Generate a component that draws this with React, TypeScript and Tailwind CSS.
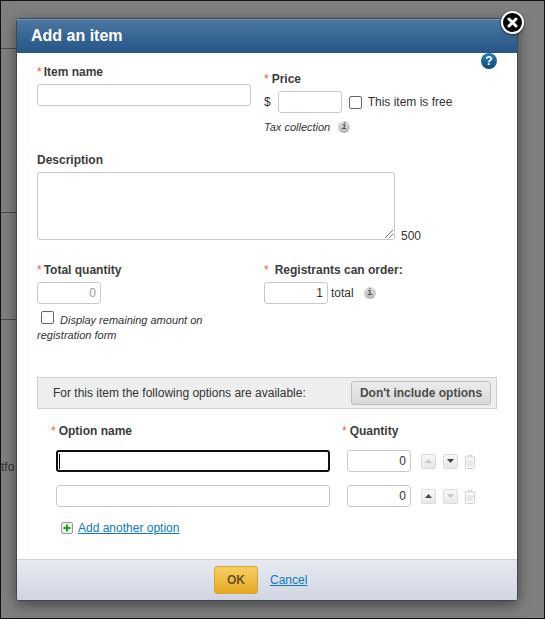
import React from 'react';

const inputBox = 'h-[22px] rounded-[3px] border border-[#c8c8c8] bg-white pr-[4px] text-right text-[12px] text-[#333] outline-none';
const labelText = 'text-[12px] font-bold text-[#3c3c3c]';

const Star = () => <span className="text-[12px] text-[#f0584a]">*</span>;

const InfoDot = () => (
  <span className="flex size-[12px] items-center justify-center rounded-full bg-gradient-to-b from-[#e2e2e2] to-[#b4b4b4] font-['DejaVu_Sans_Mono',monospace] text-[8px] font-bold leading-none text-[#555]">
    i
  </span>
);

const Arrow = ({ up, disabled }: { up?: boolean; disabled?: boolean }) => (
  <span className="flex size-[15px] items-center justify-center rounded-[2px] border border-[#dcdcdc] bg-gradient-to-b from-[#f8f8f8] to-[#e8e8e8]">
    <svg width="7" height="4" viewBox="0 0 7 4">
      <path d={up ? 'M3.5 0L7 4H0z' : 'M0 0h7L3.5 4z'} fill={disabled ? '#c8c8c8' : '#444'} />
    </svg>
  </span>
);

const Trash = () => (
  <svg width="12" height="15" viewBox="0 0 12 15" fill="none" stroke="#d0d0d0" strokeWidth="1">
    <path d="M0.5 3h11M4 3V1.2h4V3M1.5 3.5v10.2c0 .5.3.8.8.8h7.4c.5 0 .8-.3.8-.8V3.5M4 5.5v7M6 5.5v7M8 5.5v7" />
  </svg>
);

const OptionRow = ({ focused, upDisabled, downDisabled }: { focused?: boolean; upDisabled?: boolean; downDisabled?: boolean }) => (
  <div className="flex items-center">
    {focused ? (
      <div className="ml-[19px] flex h-[22px] w-[274px] items-center rounded-[3px] border-2 border-[#101010] bg-white pl-[1px]">
        <span className="h-[15px] w-px bg-black" />
      </div>
    ) : (
      <div className="ml-[19px] h-[22px] w-[274px] rounded-[3px] border border-[#c8c8c8] bg-white" />
    )}
    <div className={`${inputBox} ml-[17px] flex w-[64px] items-center justify-end leading-none`}>0</div>
    <div className="ml-[10px] flex items-center gap-[7px]">
      <Arrow up disabled={upDisabled} />
      <Arrow disabled={downDisabled} />
    </div>
    <span className="ml-[6px] flex"><Trash /></span>
  </div>
);

const App: React.FC = () => {
  return (
    <div className="relative h-[619px] w-[545px] overflow-hidden border border-[#111] bg-[#7f7f7f] font-['Liberation_Sans',Arial,sans-serif] text-[12px] text-[#333]">
      {/* page behind the overlay */}
      <div className="flex h-full w-[15px] flex-col">
        <div className="mt-[47px] h-px bg-[#4a4a4a]" />
        <div className="mt-[163px] h-px bg-[#4a4a4a]" />
        <div className="mt-[106px] h-px bg-[#4a4a4a]" />
        <span className="mt-[141px] text-[12px] leading-none text-[#333]">tfo</span>
      </div>

      <div className="absolute left-[15px] top-[17px] flex h-[583px] w-[502px] flex-col rounded-[3px] border border-[#3f4656] bg-white shadow-[0_4px_14px_rgba(0,0,0,0.45)]">
        <div className="flex h-[34px] shrink-0 items-center rounded-t-[2px] border-t border-[#7397bb] bg-gradient-to-b from-[#4a76a0] to-[#255687] pb-[2px] pl-[14px] text-[16px] font-bold text-white">
          Add an item
        </div>

        <div className="relative flex-1 pl-[20px]">
          <div className="flex">
            <div className="w-[227px] pt-[12px]">
              <div className="flex h-[14px] items-center gap-[2px] leading-none">
                <Star />
                <span className={labelText}>Item name</span>
              </div>
              <div className="mt-[5px] h-[22px] w-[214px] rounded-[3px] border border-[#c8c8c8] bg-white" />
            </div>
            <div className="pt-[19px]">
              <div className="flex h-[14px] items-center gap-[3px] leading-none">
                <Star />
                <span className={labelText}>Price</span>
              </div>
              <div className="mt-[5px] flex items-center">
                <span>$</span>
                <div className="ml-[7px] h-[22px] w-[64px] rounded-[3px] border border-[#c8c8c8] bg-white" />
                <span className="ml-[7px] size-[13px] rounded-[2px] border border-[#666] bg-white" />
                <span className="ml-[6px]">This item is free</span>
              </div>
              <div className="mt-[8px] flex items-center gap-[8px] text-[11px] italic leading-none">
                Tax collection
                <InfoDot />
              </div>
            </div>
          </div>

          <div className="mt-[20px] flex items-end">
            <div>
              <div className={`${labelText} leading-[14px]`}>Description</div>
              <div className="relative mt-[5px] h-[68px] w-[358px] rounded-[3px] border border-[#c8c8c8] bg-white">
                <svg className="absolute bottom-0 right-0" width="10" height="10" viewBox="0 0 10 10" stroke="#777" strokeWidth="1">
                  <path d="M1 9l8-8M5 9l4-4" />
                </svg>
              </div>
            </div>
            <span className="-mb-[2px] ml-[6px] leading-none">500</span>
          </div>

          <div className="mt-[23px] flex">
            <div className="w-[227px]">
              <div className="flex h-[14px] items-center gap-[2px] leading-none">
                <Star />
                <span className={labelText}>Total quantity</span>
              </div>
              <div className={`${inputBox} mt-[5px] flex w-[64px] items-center justify-end leading-none text-[#999]`}>0</div>
              <div className="mt-[8px] w-[180px] text-[11px] italic leading-[15px]">
                <span className="relative -top-px ml-[4px] mr-[6px] inline-block size-[13px] rounded-[2px] border border-[#666] bg-white align-[-1px]" />
                Display remaining amount on registration form
              </div>
            </div>
            <div>
              <div className="flex h-[14px] items-center gap-[6px] leading-none">
                <Star />
                <span className={labelText}>Registrants can order:</span>
              </div>
              <div className="mt-[5px] flex items-center">
                <div className={`${inputBox} flex w-[64px] items-center justify-end leading-none`}>1</div>
                <span className="ml-[3px]">total</span>
                <span className="ml-[10px]"><InfoDot /></span>
              </div>
            </div>
          </div>

          <div className="mt-[34px] flex h-[32px] w-[460px] items-center justify-between border border-[#d0d0d0] bg-[#eeeeee] pl-[15px] pr-[5px]">
            <span>For this item the following options are available:</span>
            <span className="flex h-[24px] w-[140px] items-center justify-center rounded-[3px] border border-[#bdbdbd] bg-gradient-to-b from-[#ececec] to-[#d8d8d8] font-bold text-[#4c4c4c]">
              Don't include options
            </span>
          </div>

          <div className="mt-[15px] flex h-[14px] items-center leading-none">
            <div className="ml-[14px] flex w-[291px] items-center gap-[3px]">
              <Star />
              <span className={labelText}>Option name</span>
            </div>
            <div className="flex items-center gap-[3px]">
              <Star />
              <span className={labelText}>Quantity</span>
            </div>
          </div>

          <div className="mt-[12px] flex flex-col gap-[13px]">
            <OptionRow focused downDisabled={false} upDisabled />
            <OptionRow downDisabled />
          </div>

          <div className="ml-[24px] mt-[12px] flex items-center gap-[5px]">
            <span className="flex size-[12px] items-center justify-center rounded-[2px] border border-[#9a9a9a] bg-[#eeeeee]">
              <svg width="8" height="8" viewBox="0 0 8 8"><path d="M3 0.5h2v2.5h2.5v2H5v2.5H3V5H0.5V3H3z" fill="#17a817" /></svg>
            </span>
            <a className="text-[#0d7ac4] underline">Add another option</a>
          </div>
        </div>

        <div className="flex h-[41px] shrink-0 items-center rounded-b-[2px] border-t border-[#cfcfcf] bg-gradient-to-b from-[#e8eaf1] to-[#d0d5e2] pl-[197px]">
          <span className="flex h-[28px] w-[44px] items-center justify-center rounded-[3px] border border-[#d9a730] bg-gradient-to-b from-[#f8cf62] to-[#e6a91c] font-bold text-[#665420]">
            OK
          </span>
          <a className="ml-[12px] text-[#0d7ac4] underline">Cancel</a>
        </div>

        {/* help */}
        <span className="absolute right-[20px] top-[34px] flex size-[16px] items-center justify-center rounded-full bg-gradient-to-b from-[#2c7fb0] to-[#0b4a80] text-[12px] font-bold leading-none text-white">
          ?
        </span>
      </div>

      {/* close */}
      <span className="absolute left-[500px] top-[10px] flex size-[23px] items-center justify-center rounded-full border-2 border-white bg-black shadow-[0_1px_3px_rgba(0,0,0,0.6)]">
        <svg width="11" height="11" viewBox="0 0 11 11" stroke="white" strokeWidth="3" strokeLinecap="round">
          <path d="M2 2l7 7M9 2l-7 7" />
        </svg>
      </span>
    </div>
  );
};

export default App;
